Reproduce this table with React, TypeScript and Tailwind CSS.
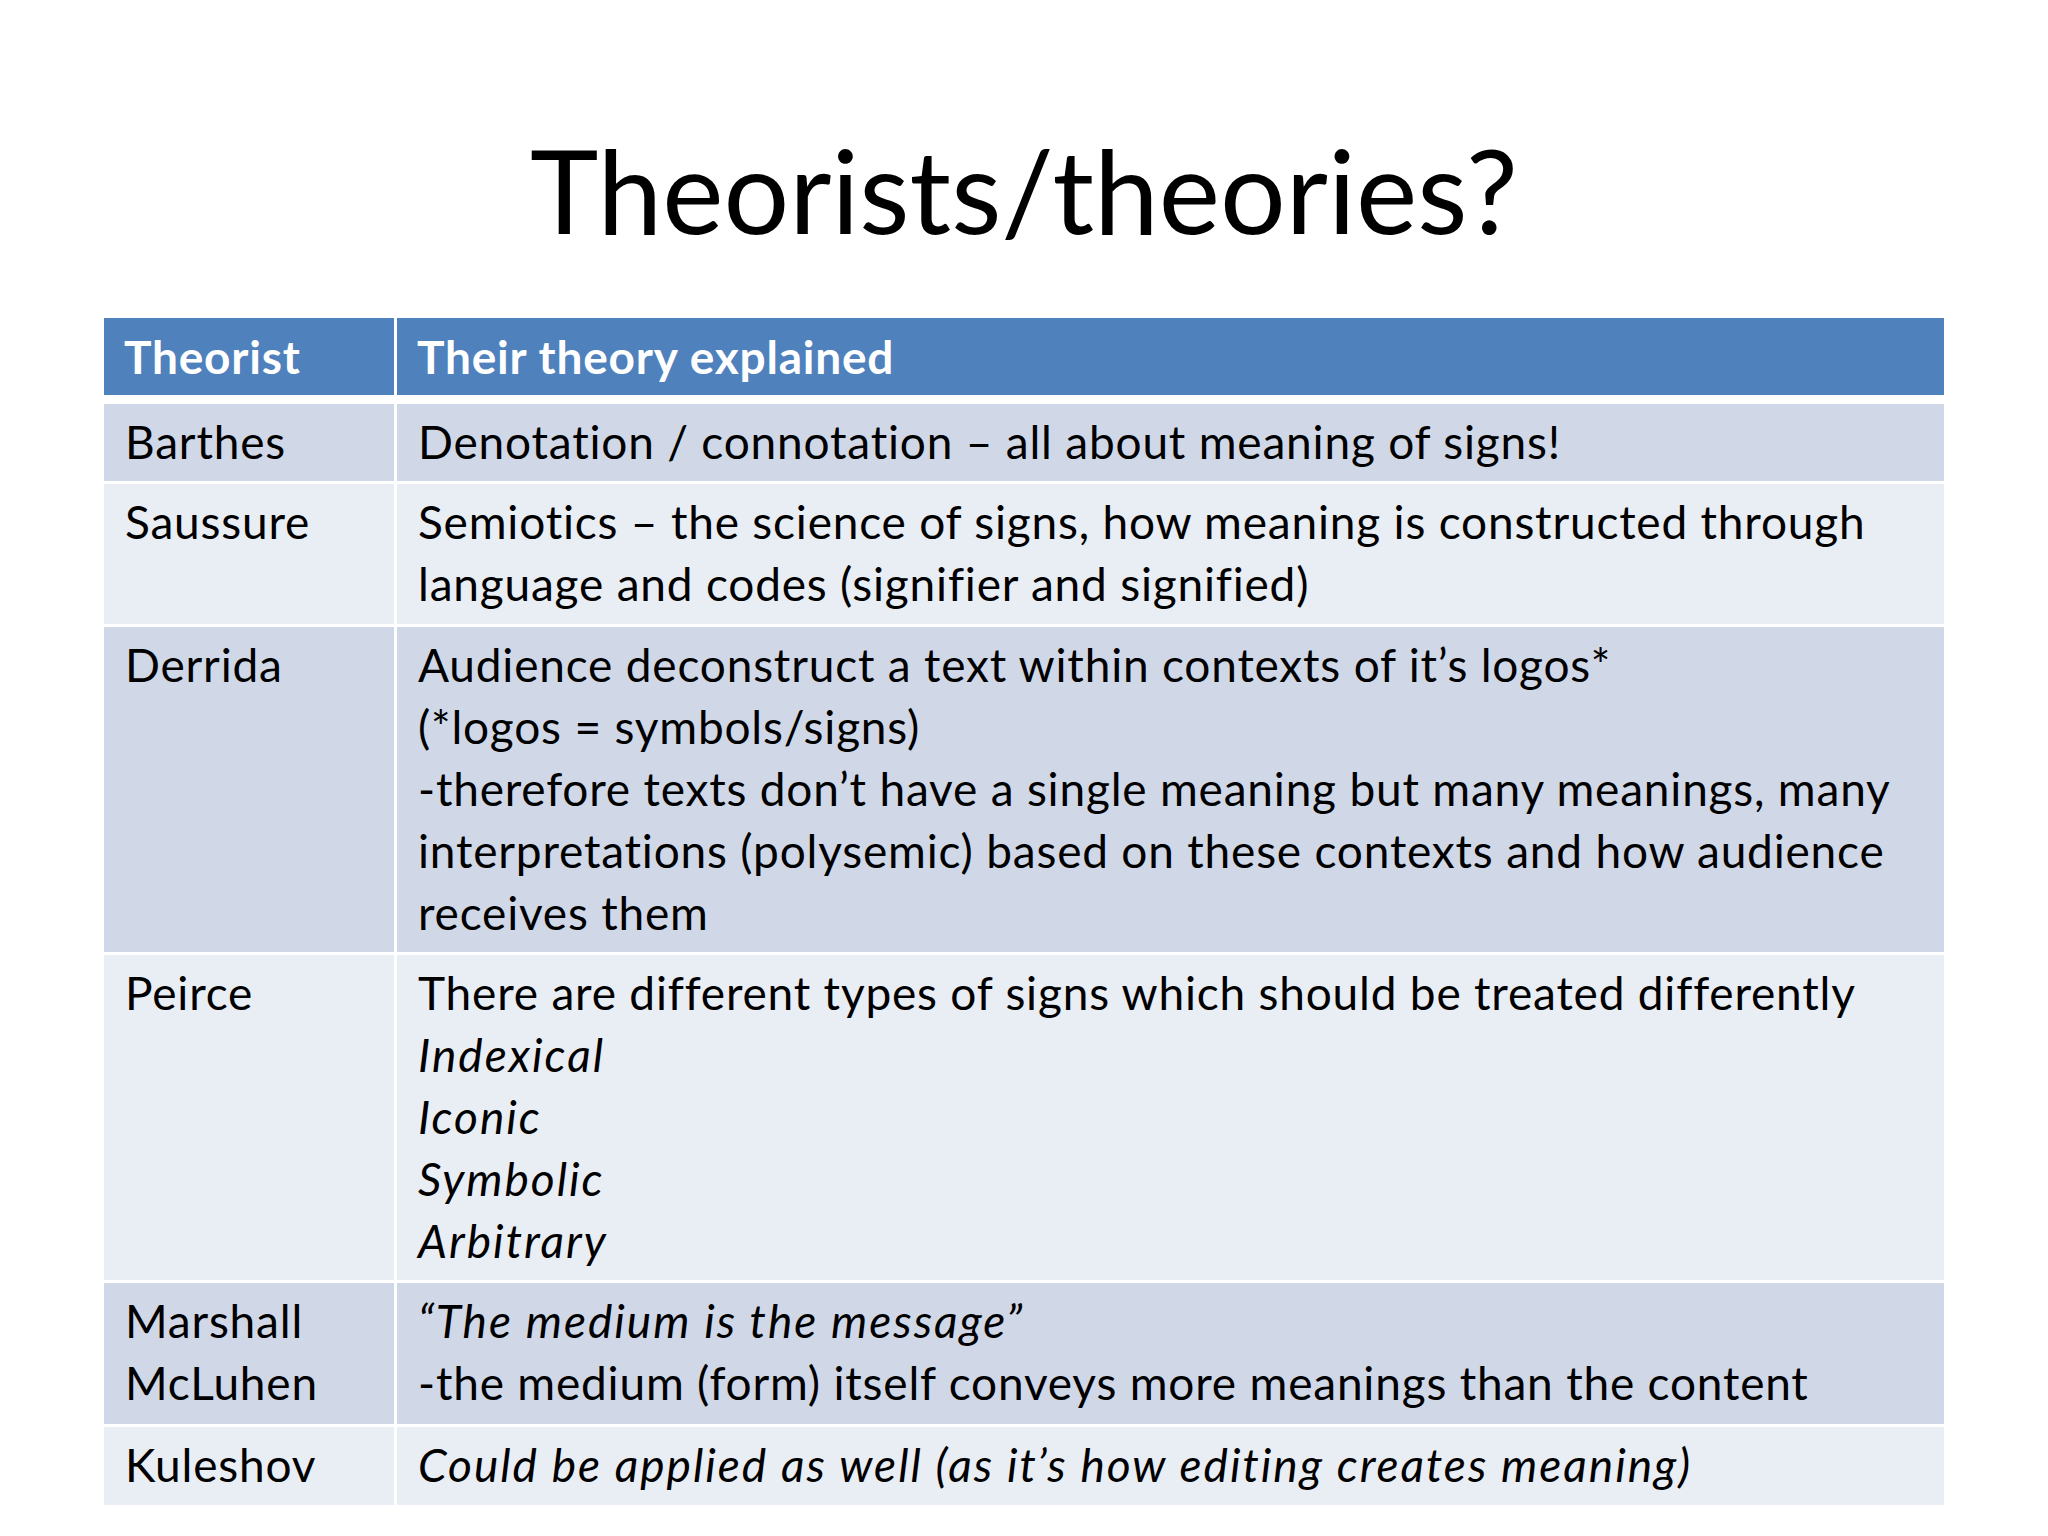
const rows = [
  {
    name: ["Barthes"],
    lines: [<>Denotation / connotation – all about meaning of signs!</>],
    band: true,
    pad: "pb-[8px]",
  },
  {
    name: ["Saussure"],
    lines: [
      <>Semiotics – the science of signs, how meaning is constructed through</>,
      <>language and codes (signifier and signified)</>,
    ],
    band: false,
    pad: "pb-[9px]",
  },
  {
    name: ["Derrida"],
    lines: [
      <>Audience deconstruct a text within contexts of it’s logos*</>,
      <>(*logos = symbols/signs)</>,
      <>-therefore texts don’t have a single meaning but many meanings, many</>,
      <>interpretations (polysemic) based on these contexts and how audience</>,
      <>receives them</>,
    ],
    band: true,
    pad: "pb-[8px]",
  },
  {
    name: ["Peirce"],
    lines: [
      <>There are different types of signs which should be treated differently</>,
      <em className="tracking-[2px]">Indexical</em>,
      <em className="tracking-[2px]">Iconic</em>,
      <em className="tracking-[2px]">Symbolic</em>,
      <em className="tracking-[2px]">Arbitrary</em>,
    ],
    band: false,
    pad: "pb-[8px]",
  },
  {
    name: ["Marshall", "McLuhen"],
    lines: [
      <em className="tracking-[2px]">“The medium is the message”</em>,
      <>-the medium (form) itself conveys more meanings than the content</>,
    ],
    band: true,
    pad: "pb-[10px]",
  },
  {
    name: ["Kuleshov"],
    lines: [
      <em className="tracking-[2px]">
        Could be applied as well (as it’s how editing creates meaning)
      </em>,
    ],
    band: false,
    pad: "pb-[9px]",
  },
];

export default function App() {
  return (
    <div className="w-[2048px] h-[1536px] bg-white overflow-hidden font-['Lato',sans-serif] text-black">
      {/* Slide title */}
      <div className="h-[318px] pt-[125px] flex justify-center">
        <h1 className="text-[116px] leading-[130px] font-normal">Theorists/theories?</h1>
      </div>

      {/* Table */}
      <div className="ml-[104px] w-[1840px] flex flex-col tracking-[0.8px]">
        <div className="grid grid-cols-[290px_1547px] gap-x-[3px] mb-[9px] text-white font-bold text-[46px] leading-[62px]">
          <div className="bg-[#4f81bd] h-[77px] pl-[20px] pt-[8px]">Theorist</div>
          <div className="bg-[#4f81bd] h-[77px] pl-[20px] pt-[8px]">Their theory explained</div>
        </div>
        <div className="flex flex-col gap-y-[3px]">
          {rows.map((row) => (
            <div
              key={row.name.join(" ")}
              className="grid grid-cols-[290px_1547px] gap-x-[3px] text-[46px] leading-[62px]"
            >
              <div
                className={
                  (row.band ? "bg-[#d0d8e8]" : "bg-[#e9edf4]") +
                  " pl-[21px] pt-[7px] " +
                  row.pad
                }
              >
                {row.name.map((n) => (
                  <div key={n}>{n}</div>
                ))}
              </div>
              <div
                className={
                  (row.band ? "bg-[#d0d8e8]" : "bg-[#e9edf4]") +
                  " pl-[21px] pt-[7px] whitespace-nowrap " +
                  row.pad
                }
              >
                {row.lines.map((l, i) => (
                  <div key={i}>{l}</div>
                ))}
              </div>
            </div>
          ))}
        </div>
      </div>
    </div>
  );
}
